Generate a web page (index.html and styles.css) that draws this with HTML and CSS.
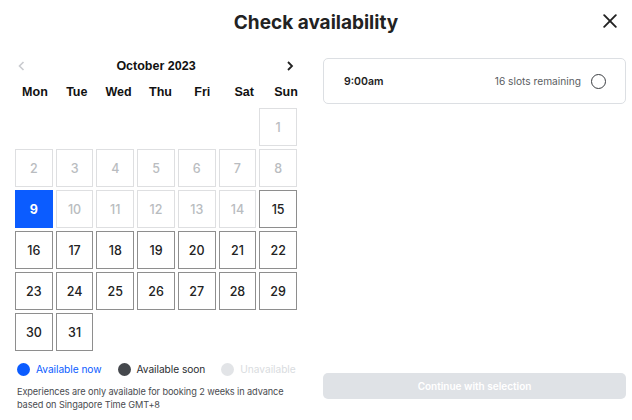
FILE: index.html
```html
<!DOCTYPE html>
<html lang="en">
<head>
<meta charset="utf-8">
<title>Check availability</title>
<link rel="stylesheet" href="styles.css">
</head>
<body>
<div class="modal">
  <header class="modal-head">
    <span></span>
    <h1 class="title">Check availability</h1>
    <button class="close" aria-label="Close">
      <svg width="14" height="14" viewBox="0 0 14 14"><path d="M1.2 1.2L12.8 12.8M12.8 1.2L1.2 12.8" stroke="#222" stroke-width="1.9" stroke-linecap="round"/></svg>
    </button>
  </header>
  <main class="body">
    <section class="calendar">
      <div class="nav">
        <span class="chev prev"><svg width="8" height="10" viewBox="0 0 8 10"><path d="M5.5 1L1.5 5L5.5 9" fill="none" stroke="#c9cbcf" stroke-width="1.6"/></svg></span>
        <span class="month">October 2023</span>
        <span class="chev next"><svg width="8" height="10" viewBox="0 0 8 10"><path d="M2 1L6 5L2 9" fill="none" stroke="#222" stroke-width="1.8"/></svg></span>
      </div>
      <div class="weekdays">
        <span>Mon</span><span>Tue</span><span>Wed</span><span>Thu</span><span>Fri</span><span>Sat</span><span>Sun</span>
      </div>
      <div class="days">
        <span class="day off first">1</span>
        <span class="day off">2</span><span class="day off">3</span><span class="day off">4</span><span class="day off">5</span><span class="day off">6</span><span class="day off">7</span><span class="day off">8</span>
        <span class="day sel">9</span><span class="day off">10</span><span class="day off">11</span><span class="day off">12</span><span class="day off">13</span><span class="day off">14</span><span class="day">15</span>
        <span class="day">16</span><span class="day">17</span><span class="day">18</span><span class="day">19</span><span class="day">20</span><span class="day">21</span><span class="day">22</span>
        <span class="day">23</span><span class="day">24</span><span class="day">25</span><span class="day">26</span><span class="day">27</span><span class="day">28</span><span class="day">29</span>
        <span class="day">30</span><span class="day">31</span>
      </div>
      <div class="legend">
        <span class="key now"><i class="dot"></i>Available now</span>
        <span class="key soon"><i class="dot"></i>Available soon</span>
        <span class="key na"><i class="dot"></i>Unavailable</span>
      </div>
      <p class="note">Experiences are only available for booking 2 weeks in advance<br>based on Singapore Time GMT+8</p>
    </section>
    <section class="slots">
      <div class="slot">
        <span class="time">9:00am</span>
        <span class="remaining">16 slots remaining</span>
        <span class="radio"></span>
      </div>
      <button class="continue">Continue with selection</button>
    </section>
  </main>
</div>
</body>
</html>
```
FILE: styles.css
```css
* { box-sizing: border-box; }
html, body { margin: 0; background: #fff; }
body {
  font-family: Inter, "Noto Sans", sans-serif;
  color: #222;
  width: 632px;
  height: 420px;
  overflow: hidden;
}
.modal-head {
  display: grid;
  grid-template-columns: 1fr auto 1fr;
  align-items: center;
  height: 44px;
  padding: 0 15px 0 15px;
}
.title {
  margin: 0;
  font-size: 19px;
  font-weight: 700;
  letter-spacing: 0;
  color: #222;
  line-height: 24px;
  padding-top: 1px;
}
.close {
  justify-self: end;
  border: 0;
  background: none;
  padding: 0;
  width: 14px;
  height: 14px;
  display: flex;
  margin-top: -2px;
}
.body {
  display: flex;
  gap: 26px;
  padding: 14px 6px 0 15px;
}
.calendar {
  width: 282px;
  flex: none;
}
.nav {
  display: flex;
  align-items: center;
  justify-content: space-between;
  height: 16px;
  padding: 0 3px 0 3px;
}
.chev { display: flex; }
.month {
  font-family: "Liberation Sans", Arial, sans-serif;
  font-weight: 700;
  font-size: 12.5px;
  color: #111;
}
.weekdays {
  display: grid;
  grid-template-columns: repeat(7, 1fr);
  margin: 10px -10px 0 -1px;
  height: 16px;
  align-items: center;
  text-align: center;
  font-family: "Liberation Sans", Arial, sans-serif;
  font-weight: 700;
  font-size: 12.5px;
  color: #111;
}
.days {
  display: grid;
  grid-template-columns: repeat(7, 1fr);
  grid-auto-rows: 38px;
  gap: 3px;
  margin-top: 8px;
}
.day {
  display: flex;
  align-items: center;
  justify-content: center;
  border: 1px solid #8e8e8e;
  font-size: 12.5px;
  font-weight: 500;
  color: #222;
}
.day.first { grid-column-start: 7; }
.day.off {
  border-color: #dedfe1;
  color: #b9bcc0;
}
.day.sel {
  background: #0b5cff;
  border-color: #0b5cff;
  color: #fff;
  font-weight: 700;
}
.legend {
  display: flex;
  align-items: center;
  gap: 16px;
  margin-top: 11px;
  padding-left: 2px;
  height: 14px;
  font-size: 10.2px;
  letter-spacing: -0.05px;
  white-space: nowrap;
}
.key { display: flex; align-items: center; gap: 6px; flex: none; }
.dot {
  width: 13px;
  height: 13px;
  border-radius: 50%;
  display: block;
}
.now { color: #0b5cff; }
.now .dot { background: #0b5cff; }
.soon { color: #2a2c30; }
.soon .dot { background: #45484d; }
.na { color: #d9dce0; }
.na .dot { background: #e2e4e7; }
.note {
  margin: 9px 0 0 2px;
  font-size: 9.2px;
  letter-spacing: -0.1px;
  line-height: 13px;
  color: #4a4c50;
  white-space: nowrap;
}
.slots {
  flex: 1;
  display: flex;
  flex-direction: column;
  justify-content: space-between;
  padding-bottom: 12px;
}
.slot {
  display: flex;
  align-items: center;
  height: 46px;
  border: 1px solid #dcdfe3;
  border-radius: 5px;
  padding: 0 19px 0 20px;
  font-size: 10.5px;
}
.time { font-weight: 600; color: #1e1e1e; }
.remaining { margin-left: auto; color: #5a5d62; font-size: 10.2px; }
.radio {
  width: 15px;
  height: 15px;
  border: 1.6px solid #3b3e42;
  border-radius: 50%;
  margin-left: 10px;
}
.continue {
  height: 26px;
  border: 0;
  border-radius: 5px;
  background: #dfe2e6;
  color: #fff;
  font-family: Inter, "Noto Sans", sans-serif;
  font-size: 10px;
  font-weight: 600;
  width: 303px;
}
```
